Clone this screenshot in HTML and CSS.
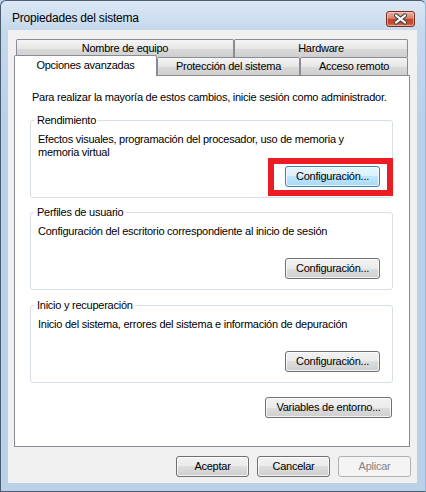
FILE: index.html
```html
<!DOCTYPE html>
<html lang="es">
<head>
<meta charset="utf-8">
<title>Propiedades del sistema</title>
<link rel="stylesheet" href="styles.css">
</head>
<body>
<div class="window">
  <div class="titlebar">
    <span class="title">Propiedades del sistema</span>
    <button class="close" aria-label="Cerrar">
      <svg width="29" height="16" viewBox="0 0 29 16">
        <path d="M10 4.5 L19 11.5 M19 4.5 L10 11.5" stroke="#4a4a4a" stroke-width="4.2" stroke-linecap="round" fill="none"/>
        <path d="M10 4.5 L19 11.5 M19 4.5 L10 11.5" stroke="#ffffff" stroke-width="2.2" stroke-linecap="round" fill="none"/>
      </svg>
    </button>
  </div>
  <div class="client">
    <div class="tabrow back">
      <div class="tab tab-nombre">Nombre de equipo</div>
      <div class="tab tab-hardware">Hardware</div>
    </div>
    <div class="tabrow front">
      <div class="tab selected tab-opciones">Opciones avanzadas</div>
      <div class="tab front-tab tab-proteccion">Protección del sistema</div>
      <div class="tab front-tab tab-acceso">Acceso remoto</div>
    </div>
    <div class="panel">
      <p class="intro">Para realizar la mayoría de estos cambios, inicie sesión como administrador.</p>
      <fieldset class="group g1">
        <legend>Rendimiento</legend>
        <p>Efectos visuales, programación del procesador, uso de memoria y<br>memoria virtual</p>
        <div class="btn-row">
          <button class="btn cfg default">Configuración...</button>
          <div class="annot"></div>
        </div>
      </fieldset>
      <fieldset class="group g2">
        <legend>Perfiles de usuario</legend>
        <p>Configuración del escritorio correspondiente al inicio de sesión</p>
        <div class="btn-row">
          <button class="btn cfg">Configuración...</button>
        </div>
      </fieldset>
      <fieldset class="group g3">
        <legend>Inicio y recuperación</legend>
        <p>Inicio del sistema, errores del sistema e información de depuración</p>
        <div class="btn-row">
          <button class="btn cfg">Configuración...</button>
        </div>
      </fieldset>
      <div class="env-row">
        <button class="btn env">Variables de entorno...</button>
      </div>
    </div>
    <div class="footer">
      <button class="btn dlg">Aceptar</button>
      <button class="btn dlg">Cancelar</button>
      <button class="btn dlg" disabled>Aplicar</button>
    </div>
  </div>
</div>
</body>
</html>
```
FILE: styles.css
```css
html, body {
  margin: 0;
  padding: 0;
}

body {
  font-family: "Liberation Sans", Arial, sans-serif;
  font-size: 11px;
  line-height: 13px;
  letter-spacing: -0.25px;
  color: #000;
  background: #b9d1ea;
}

.window {
  width: 426px;
  height: 492px;
  box-sizing: border-box;
  display: flex;
  flex-direction: column;
  padding: 0 8px 8px 7px;
  border: 1px solid #4d5d70;
  border-right-color: #9fb6cf;
  border-radius: 6px 6px 0 0;
  background: linear-gradient(#dbe7f4, #c4d8ed 30px, #bad1ea 120px, #bad1ea);
}

/* Title bar */
.titlebar {
  height: 29px;
  flex: none;
  display: flex;
  align-items: flex-start;
  justify-content: space-between;
}

.title {
  margin: 10px 0 0 4px;
  font-size: 12px;
  line-height: 15px;
  letter-spacing: -0.2px;
  color: #000;
}

.close {
  width: 29px;
  height: 16px;
  margin: 10px 2px 0 0;
  padding: 0;
  box-sizing: border-box;
  border: 1px solid #7b2c20;
  border-radius: 3px;
  background: linear-gradient(#eab0a3, #d98370 45%, #c4462d 50%, #c24a2f 80%, #dd7a5e);
  box-shadow: inset 0 0 0 1px rgba(255, 235, 230, 0.45);
  display: flex;
  align-items: center;
  justify-content: center;
}

.close svg {
  display: block;
  margin: -1px;
}

/* Client area */
.client {
  flex: 1;
  background: #f0f0f0;
  padding: 9px 7px 6px 6px;
  display: flex;
  flex-direction: column;
}

/* Tabs */
.tabrow {
  display: flex;
  flex: none;
}

.tabrow.back {
  height: 18px;
  margin-left: 2px;
  margin-bottom: -2px;
}

.tabrow.front {
  height: 21px;
  align-items: flex-start;
  margin-bottom: -1px;
  position: relative;
  z-index: 1;
}

.tab {
  box-sizing: border-box;
  height: 18px;
  border: 1px solid #898c95;
  border-bottom: none;
  border-radius: 2px 2px 0 0;
  background: linear-gradient(#f5f5f5, #e6e6e6 50%, #d9d9d9 55%, #cfcfcf);
  display: flex;
  align-items: center;
  justify-content: center;
  white-space: nowrap;
}

.tab-nombre { width: 218px; }
.tab-hardware { width: 174px; }

.tab.front-tab {
  margin-top: 2px;
}

.tab.selected {
  height: 21px;
  padding-bottom: 2px;
  background: #fff;
}

.tab-opciones { width: 143px; }
.tab-proteccion { width: 143px; }
.tab-acceso { width: 108px; }

/* Tab panel */
.panel {
  flex: none;
  background: #fff;
  border: 1px solid #898c95;
  padding: 0 16px 28px 15px;
}

.intro {
  margin: 15px 0 0 2px;
  white-space: nowrap;
}

.group {
  margin: 10px 0 0 0;
  border: 1px solid #d5dfe5;
  border-radius: 3px;
  padding: 6px 12px 10px 7px;
  min-inline-size: 0;
}

.g2 { margin-top: 8px; }
.g3 { margin-top: 9px; }

.group legend {
  padding: 0 2px 0 3px;
  margin-left: -4px;
  line-height: 13px;
}

.group p {
  margin: 0;
  min-height: 26px;
  white-space: nowrap;
}

.btn-row {
  margin-top: 7px;
  display: flex;
  justify-content: flex-end;
  position: relative;
}

.annot {
  position: absolute;
  right: -13px;
  top: -8px;
  width: 125px;
  height: 38px;
  box-sizing: border-box;
  border: 6px solid #ed1c24;
  pointer-events: none;
}

.env-row {
  margin: 14px 1px 0 0;
  display: flex;
  justify-content: flex-end;
}

/* Buttons */
.btn {
  box-sizing: border-box;
  height: 21px;
  padding: 0;
  font: inherit;
  letter-spacing: inherit;
  color: #000;
  border: 1px solid #707070;
  border-radius: 3px;
  background: linear-gradient(#f2f2f2, #ebebeb 50%, #dddddd 50%, #cfcfcf);
  box-shadow: inset 0 0 0 1px rgba(255, 255, 255, 0.75);
  white-space: nowrap;
}

.btn.cfg { width: 95px; }
.btn.env { width: 127px; }
.btn.dlg { width: 73px; }

.btn.default {
  border-color: #3c7fb1;
  background: linear-gradient(#eaf6fd, #d9f0fc 50%, #bee6fd 50%, #a7d9f5);
}

.btn:disabled {
  border-color: #adb2b5;
  background: #f4f4f4;
  color: #838383;
  box-shadow: none;
}

/* Footer */
.footer {
  flex: none;
  margin: 9px -1px 0 0;
  display: flex;
  justify-content: flex-end;
  gap: 8px;
}
```
